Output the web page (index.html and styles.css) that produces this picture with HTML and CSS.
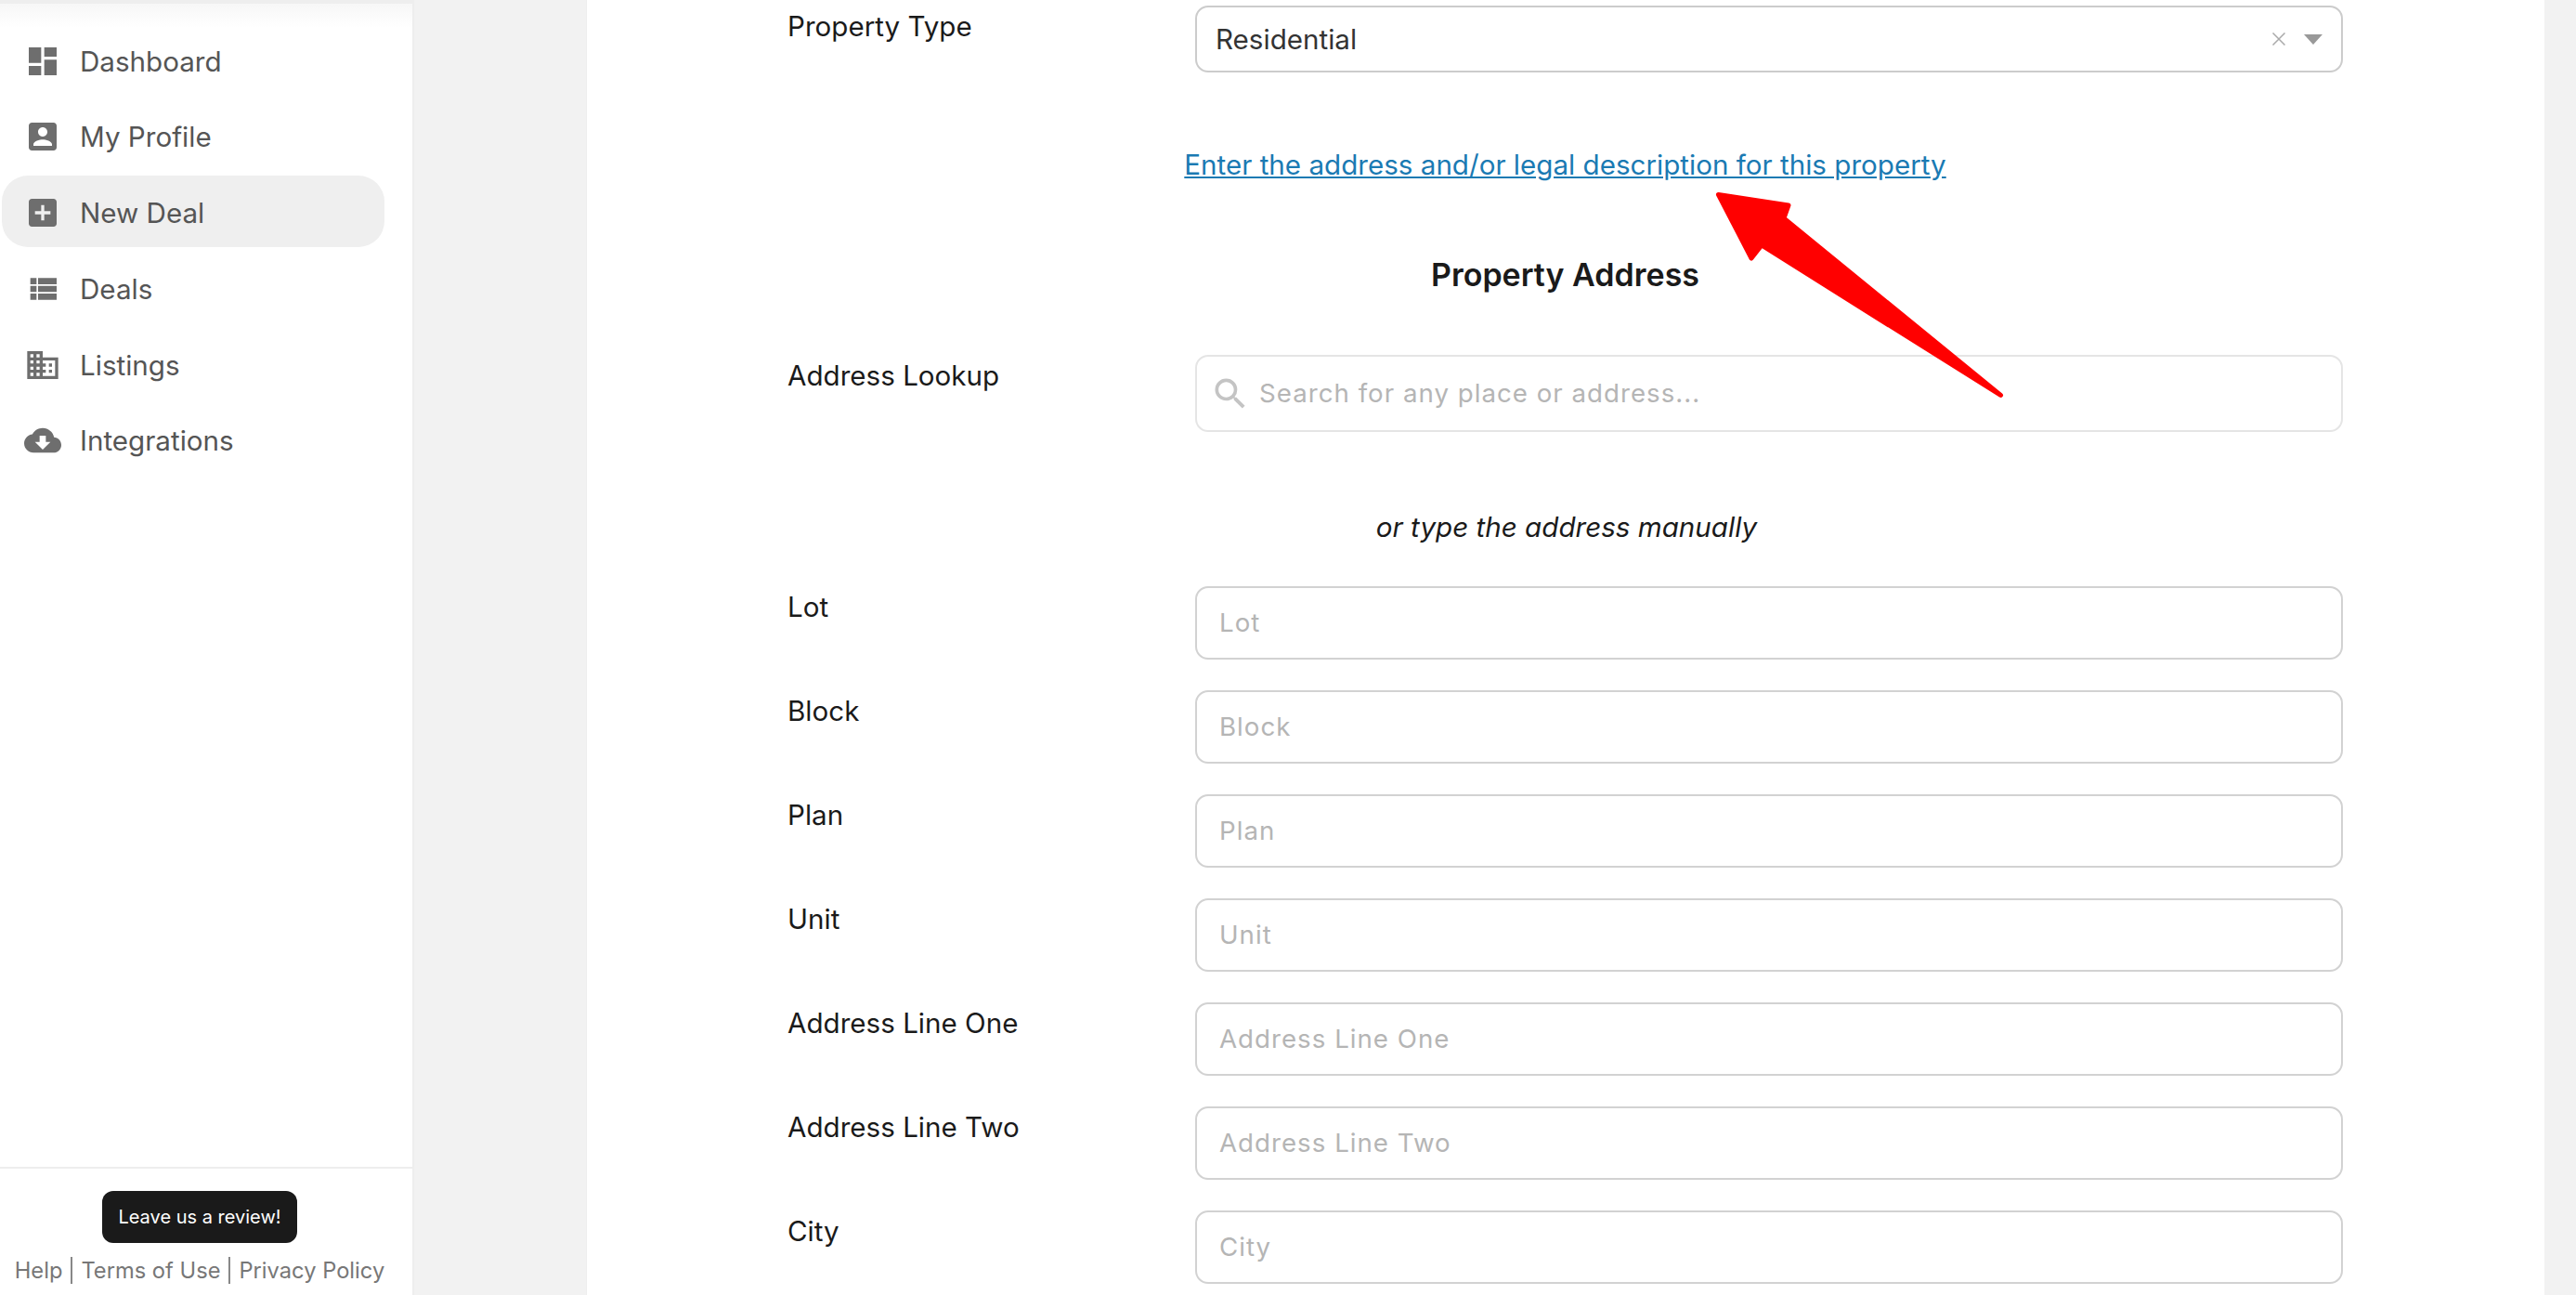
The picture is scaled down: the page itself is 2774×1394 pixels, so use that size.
FILE: index.html
```html
<!DOCTYPE html>
<html lang="en">
<head>
  <meta charset="UTF-8">
  <meta name="viewport" content="width=device-width, initial-scale=1.0">
  <title>New Deal</title>
  <link rel="stylesheet" href="styles.css">
</head>
<body>
  <aside class="sidebar">
    <nav class="nav">
      <a class="nav-item" href="#">
        <svg class="nav-icon" viewBox="0 0 24 24"><path d="M3 13h8V3H3v10zm0 8h8v-6H3v6zm10 0h8V11h-8v10zm0-18v6h8V3h-8z"/></svg>
        Dashboard
      </a>
      <a class="nav-item" href="#">
        <svg class="nav-icon" viewBox="0 0 24 24"><path d="M3 5v14c0 1.1.89 2 2 2h14c1.1 0 2-.9 2-2V5c0-1.1-.9-2-2-2H5c-1.11 0-2 .9-2 2zm12 4c0 1.66-1.34 3-3 3s-3-1.34-3-3 1.34-3 3-3 3 1.34 3 3zm-9 8c0-2 4-3.1 6-3.1s6 1.1 6 3.1v1H6v-1z"/></svg>
        My Profile
      </a>
      <a class="nav-item active" href="#">
        <svg class="nav-icon" viewBox="0 0 24 24"><path d="M19 3H5c-1.11 0-2 .9-2 2v14c0 1.1.89 2 2 2h14c1.1 0 2-.9 2-2V5c0-1.1-.9-2-2-2zm-2 10h-4v4h-2v-4H7v-2h4V7h2v4h4v2z"/></svg>
        New Deal
      </a>
      <a class="nav-item" href="#">
        <svg class="nav-icon" viewBox="0 0 24 24"><path d="M4 14h4v-4H4v4zm0 5h4v-4H4v4zM4 9h4V5H4v4zm5 5h12v-4H9v4zm0 5h12v-4H9v4zM9 5v4h12V5H9z"/></svg>
        Deals
      </a>
      <a class="nav-item" href="#">
        <svg class="nav-icon" viewBox="0 0 24 24"><path d="M12 7V3H2v18h20V7H12zM6 19H4v-2h2v2zm0-4H4v-2h2v2zm0-4H4V9h2v2zm0-4H4V5h2v2zm4 12H8v-2h2v2zm0-4H8v-2h2v2zm0-4H8V9h2v2zm0-4H8V5h2v2zm10 12h-8v-2h2v-2h-2v-2h2v-2h-2V9h8v10zm-2-8h-2v2h2v-2zm0 4h-2v2h2v-2z"/></svg>
        Listings
      </a>
      <a class="nav-item" href="#">
        <svg class="nav-icon" viewBox="0 0 24 24"><path d="M19.35 10.04C18.67 6.59 15.64 4 12 4 9.11 4 6.6 5.64 5.35 8.04 2.34 8.36 0 10.91 0 14c0 3.31 2.69 6 6 6h13c2.76 0 5-2.24 5-5 0-2.64-2.05-4.78-4.65-4.96zM17 13l-5 5-5-5h3V9h4v4h3z"/></svg>
        Integrations
      </a>
    </nav>
    <div class="sidebar-footer">
      <button class="review-btn" type="button">Leave us a review!</button>
      <div class="footer-links">
        <a href="#">Help</a>
        <span class="sep"></span>
        <a href="#">Terms of Use</a>
        <span class="sep"></span>
        <a href="#">Privacy Policy</a>
      </div>
    </div>
  </aside>

  <main class="content">
    <div class="panel">
      <form class="deal-form">
        <div class="form-row">
          <label class="form-label">Property Type</label>
          <div class="select-box">
            <span class="select-value">Residential</span>
            <svg class="select-clear" viewBox="0 0 14 14"><path d="M0.5 0.5l13 13M13.5 0.5l-13 13"/></svg>
            <span class="select-caret"></span>
          </div>
        </div>

        <p class="form-link"><a href="#">Enter the address and/or legal description for this property</a></p>
        <h2 class="form-heading">Property Address</h2>

        <div class="form-row">
          <label class="form-label">Address Lookup</label>
          <div class="search-box">
            <svg class="search-icon" viewBox="0 0 24 24"><path d="M15.5 14h-.79l-.28-.27A6.47 6.47 0 0 0 16 9.5 6.5 6.5 0 1 0 9.5 16c1.61 0 3.09-.59 4.23-1.57l.27.28v.79l5 4.99L20.49 19l-4.99-5zm-6 0C7.01 14 5 11.99 5 9.5S7.01 5 9.5 5 14 7.01 14 9.5 11.99 14 9.5 14z"/></svg>
            <input class="search-input" type="text" placeholder="Search for any place or address...">
          </div>
        </div>

        <p class="form-note">or type the address manually</p>

        <div class="form-fields">
          <div class="form-row">
            <label class="form-label">Lot</label>
            <input class="text-input" type="text" placeholder="Lot">
          </div>
          <div class="form-row">
            <label class="form-label">Block</label>
            <input class="text-input" type="text" placeholder="Block">
          </div>
          <div class="form-row">
            <label class="form-label">Plan</label>
            <input class="text-input" type="text" placeholder="Plan">
          </div>
          <div class="form-row">
            <label class="form-label">Unit</label>
            <input class="text-input" type="text" placeholder="Unit">
          </div>
          <div class="form-row">
            <label class="form-label">Address Line One</label>
            <input class="text-input" type="text" placeholder="Address Line One">
          </div>
          <div class="form-row">
            <label class="form-label">Address Line Two</label>
            <input class="text-input" type="text" placeholder="Address Line Two">
          </div>
          <div class="form-row">
            <label class="form-label">City</label>
            <input class="text-input" type="text" placeholder="City">
          </div>
        </div>
      </form>

      <!-- annotation drawn over the page -->
      <svg class="arrow" viewBox="0 0 320 235">
        <path d="M7.5 7.5L83 19L78 33L311.5 223.5L54 62L43 76Z"/>
      </svg>
    </div>
  </main>
</body>
</html>
```

FILE: styles.css
```css
* {
  box-sizing: border-box;
}
html, body {
  height: 100%;
  margin: 0;
  overflow: hidden;
}
body {
  display: flex;
  background-color: #f2f2f2;
  font-family: Inter, "Liberation Sans", sans-serif;
  font-size: 29.6px;
  color: #1a1a1a;
}

/* Sidebar */
.sidebar {
  width: 446px;
  height: 100%;
  flex-shrink: 0;
  display: flex;
  flex-direction: column;
  background: linear-gradient(#f7f7f7, #ffffff) 0 0 / 100% 26px no-repeat, #ffffff;
  border-top: 4px solid #eeeeee;
  border-right: 2px solid #eeeeee;
}
.nav {
  flex: 1;
  display: flex;
  flex-direction: column;
  gap: 4.8px;
  padding: 21px 30px 0 2px;
}
.nav-item {
  display: flex;
  align-items: center;
  gap: 20px;
  height: 77px;
  padding: 4px 0 0 24px;
  border-radius: 28px;
  color: #555555;
  text-decoration: none;
}
.nav-item.active {
  background-color: #efefef;
}
.nav-icon {
  width: 40px;
  height: 40px;
  fill: #6e6e6e;
  flex-shrink: 0;
}
.sidebar-footer {
  display: flex;
  flex-direction: column;
  align-items: center;
  height: 138px;
  padding: 24px 14px 0 0;
  border-top: 2px solid #eeeeee;
}
.review-btn {
  width: 210px;
  height: 56px;
  border: none;
  border-radius: 12px;
  background-color: #1a1a1a;
  color: #ffffff;
  font-family: inherit;
  font-size: 20px;
}
.footer-links {
  display: flex;
  align-items: center;
  gap: 9px;
  margin-top: 15px;
  font-size: 23.7px;
  white-space: nowrap;
}
.footer-links a {
  color: #777777;
  text-decoration: none;
}
.sep {
  width: 2px;
  height: 29px;
  background-color: #888888;
}

/* Main panel */
.content {
  flex: 1;
  height: 100%;
  padding: 0 34px 0 185px;
}
.panel {
  position: relative;
  height: 100%;
  padding: 6px 0 0 216px;
  background-color: #ffffff;
  border-left: 1px solid #eeeeee;
  overflow: hidden;
}
.deal-form {
  width: 1675px;
}
.form-row {
  display: grid;
  grid-template-columns: 439px 1236px;
}
.form-fields {
  display: flex;
  flex-direction: column;
  gap: 33px;
  margin-top: 44px;
}
.form-label {
  padding-top: 2px;
  line-height: 40px;
}
.select-box {
  display: flex;
  align-items: center;
  height: 72px;
  padding: 0 20px;
  background-color: #ffffff;
  border: 2px solid #cccccc;
  border-radius: 14px;
}
.select-value {
  flex: 1;
  color: #333333;
}
.select-clear {
  width: 14px;
  height: 14px;
  margin-right: 20px;
  fill: none;
  stroke: #aaaaaa;
  stroke-width: 1.5;
}
.select-caret {
  width: 0;
  height: 0;
  border-left: 10px solid transparent;
  border-right: 10px solid transparent;
  border-top: 11px solid #999999;
}
.form-link {
  margin: 79px 0 0;
  text-align: center;
  line-height: 40px;
}
.form-link a {
  color: #1a7ab3;
}
.form-heading {
  margin: 79px 0 66px;
  text-align: center;
  font-size: 34px;
  line-height: 40px;
  font-weight: 600;
}
.search-box {
  display: flex;
  align-items: center;
  gap: 9px;
  height: 83px;
  padding-left: 14px;
  border: 2px solid #e5e5e5;
  border-radius: 14px;
}
.search-icon {
  width: 44px;
  height: 44px;
  fill: #c4c4c4;
  flex-shrink: 0;
}
.search-input, .text-input {
  font-family: inherit;
  font-size: 27.7px;
  letter-spacing: 1px;
  color: #333333;
  outline: none;
}
.search-input {
  flex: 1;
  border: none;
  background: none;
  padding: 0 0 2px;
}
.text-input {
  width: 100%;
  height: 79px;
  padding: 0 24px 2px;
  border: 2px solid #d2d2d2;
  border-radius: 14px;
}
.search-input::placeholder, .text-input::placeholder {
  color: #b5b5b5;
  opacity: 1;
}
.form-note {
  margin: 82px 0 0;
  padding-left: 3px;
  text-align: center;
  line-height: 40px;
  font-style: italic;
}

/* Red annotation arrow */
.arrow {
  position: absolute;
  left: 1211px;
  top: 202px;
  width: 320px;
  height: 235px;
}
.arrow path {
  fill: #ff0000;
  stroke: #ff0000;
  stroke-width: 5;
  stroke-linejoin: round;
}
```
